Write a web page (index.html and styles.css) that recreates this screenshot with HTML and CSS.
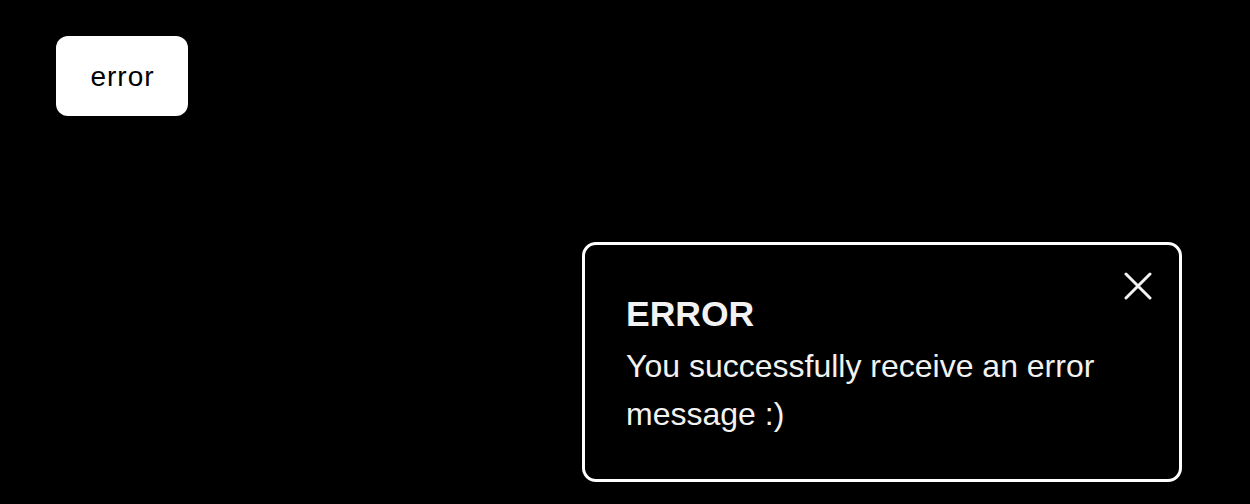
FILE: index.html
```html
<!DOCTYPE html>
<html lang="en">
<head>
<meta charset="utf-8">
<title>Error toast</title>
<link rel="stylesheet" href="styles.css">
</head>
<body>
  <main class="page">
    <button class="trigger" type="button">error</button>
  </main>
  <div class="toast" role="alert">
    <button class="toast-close" type="button" aria-label="Close">
      <svg viewBox="0 0 28 28" width="28" height="28" aria-hidden="true">
        <path d="M2 2 L26 26 M26 2 L2 26" stroke="#f2f2f2" stroke-width="3" stroke-linecap="round" fill="none"/>
      </svg>
    </button>
    <h2 class="toast-title">ERROR</h2>
    <p class="toast-text">You successfully receive an error message :)</p>
  </div>
</body>
</html>
```

FILE: styles.css
```css
html, body {
  margin: 0;
  padding: 0;
  background: #000;
  width: 100%;
  height: 100%;
  overflow: hidden;
}

body {
  font-family: "Liberation Sans", Arial, Helvetica, sans-serif;
  color: #f2f2f2;
}

.page {
  padding: 36px 56px;
  display: flex;
  align-items: flex-start;
}

.trigger {
  width: 132px;
  height: 80px;
  border: none;
  border-radius: 12px;
  background: #fff;
  color: #000;
  font-family: "Liberation Sans", Arial, Helvetica, sans-serif;
  font-size: 28px;
  letter-spacing: 1px;
  padding: 1px 0 0 1px;
  cursor: pointer;
}

.toast {
  position: fixed;
  right: 68px;
  bottom: 22px;
  width: 600px;
  box-sizing: border-box;
  border: 3px solid #fff;
  border-radius: 14px;
  background: #000;
  padding: 49px 41px 41px;
  display: flex;
  flex-direction: column;
  gap: 8px;
}

.toast-close {
  position: absolute;
  top: 24px;
  right: 24px;
  width: 34px;
  height: 34px;
  padding: 3px;
  border: none;
  background: none;
  cursor: pointer;
  display: flex;
  align-items: center;
  justify-content: center;
}

.toast-title {
  margin: 0;
  font-size: 35.5px;
  font-weight: 700;
  line-height: 40px;
  color: #f2f2f2;
}

.toast-text {
  margin: 0;
  font-size: 32px;
  line-height: 48px;
  color: #f2f2f2;
}
```
